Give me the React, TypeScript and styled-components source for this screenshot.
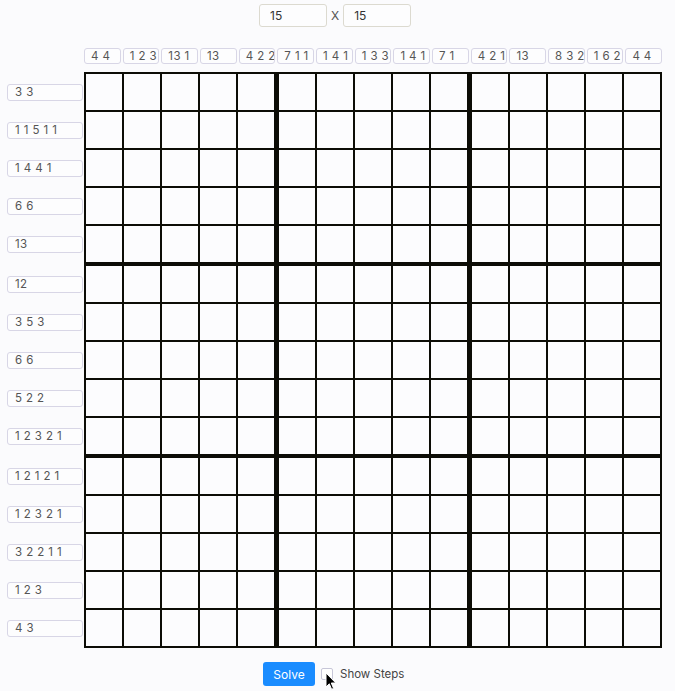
import React from 'react';
import styled, { createGlobalStyle } from 'styled-components';

const GlobalStyle = createGlobalStyle`
  html, body { margin: 0; padding: 0; background: #fbfbfd; }
  body { font-family: Inter, "Liberation Sans", sans-serif; color: #444; }
  * { box-sizing: border-box; }
`;

const colClues = ['4 4', '1 2 3', '13 1', '13', '4 2 2', '7 1 1', '1 4 1', '1 3 3', '1 4 1', '7 1', '4 2 1', '13', '8 3 2', '1 6 2', '4 4'];
const rowClues = ['3 3', '1 1 5 1 1', '1 4 4 1', '6 6', '13', '12', '3 5 3', '6 6', '5 2 2', '1 2 3 2 1', '1 2 1 2 1', '1 2 3 2 1', '3 2 2 1 1', '1 2 3', '4 3'];

const Page = styled.div`
  position: relative;
  width: 675px;
  height: 691px;
  display: flex;
  flex-direction: column;
`;

const SizeBar = styled.div`
  display: flex;
  align-items: center;
  gap: 4px;
  padding: 4px 0 0 259px;
  height: 27px;
`;

const SizeInput = styled.div`
  width: 68px;
  height: 23px;
  border: 1px solid #dcdad0;
  border-radius: 3px;
  background: #fdfdfe;
  font-size: 12px;
  color: #333;
  display: flex;
  align-items: center;
  padding-left: 10px;
`;

const Times = styled.span`
  font-size: 12px;
  color: #555;
`;

const Board = styled.div`
  display: grid;
  grid-template-columns: 77px 578px;
  grid-template-rows: 16px 576px;
  row-gap: 8px;
  padding-left: 7px;
  margin-top: 21px;
`;

const ColClueRow = styled.div`
  grid-column: 2;
  display: flex;
  gap: 2px;
`;

const ClueBox = styled.div`
  flex: 1;
  height: 100%;
  border: 1px solid #d8d6e6;
  border-radius: 3px;
  background: #fdfdfe;
  font-size: 11.5px;
  color: #555;
  display: flex;
  align-items: center;
  padding-left: 6px;
  white-space: pre;
  letter-spacing: 0.4px;
  overflow: hidden;
`;

const RowClueCol = styled.div`
  grid-column: 1;
  grid-row: 2;
  display: flex;
  flex-direction: column;
  gap: 4px;
  padding: 2px 0;
`;

const RowClueGroup = styled.div`
  display: flex;
  flex-direction: column;
  gap: 2px;
`;

const RowClueSlot = styled.div`
  height: 36px;
  display: flex;
  align-items: center;
`;

const RowClueBox = styled(ClueBox)`
  flex: none;
  width: 76px;
  height: 17px;
  padding-left: 7px;
`;

const Grid = styled.div`
  grid-column: 2;
  grid-row: 2;
  background: #0c0c06;
  padding: 2px;
  display: grid;
  grid-template-columns: repeat(3, 188px);
  grid-template-rows: repeat(3, 188px);
  column-gap: 5px;
  row-gap: 4px;
`;

const Block = styled.div`
  display: grid;
  grid-template-columns: repeat(5, 36px);
  grid-template-rows: repeat(5, 36px);
  gap: 2px;
`;

const Cell = styled.div`
  background: #fcfcfe;
`;

const Footer = styled.div`
  display: flex;
  align-items: center;
  padding-left: 263px;
  margin-top: 14px;
  height: 24px;
`;

const SolveButton = styled.button`
  width: 52px;
  height: 24px;
  border: none;
  border-radius: 3px;
  background: #1a8cff;
  color: #fff;
  font-family: inherit;
  font-size: 12px;
  padding: 0;
`;

const CheckBox = styled.span`
  width: 12px;
  height: 12px;
  margin-left: 6px;
  border: 1px solid #c7c6d8;
  border-radius: 2px;
  background: #fff;
`;

const Label = styled.span`
  margin-left: 7px;
  font-size: 11.5px;
  color: #444;
`;

const Cursor = styled.svg`
  position: absolute;
  left: 325px;
  top: 672px;
`;

const groups = [0, 1, 2];

export default function App() {
  return (
    <>
      <GlobalStyle />
      <Page>
        <SizeBar>
          <SizeInput>15</SizeInput>
          <Times>X</Times>
          <SizeInput>15</SizeInput>
        </SizeBar>
        <Board>
          <ColClueRow>
            {colClues.map((c, i) => (
              <ClueBox key={i}>{c}</ClueBox>
            ))}
          </ColClueRow>
          <RowClueCol>
            {groups.map((g) => (
              <RowClueGroup key={g}>
                {rowClues.slice(g * 5, g * 5 + 5).map((c, i) => (
                  <RowClueSlot key={i}>
                    <RowClueBox>{c}</RowClueBox>
                  </RowClueSlot>
                ))}
              </RowClueGroup>
            ))}
          </RowClueCol>
          <Grid>
            {Array.from({ length: 9 }).map((_, b) => (
              <Block key={b}>
                {Array.from({ length: 25 }).map((__, c) => (
                  <Cell key={c} />
                ))}
              </Block>
            ))}
          </Grid>
        </Board>
        <Footer>
          <SolveButton>Solve</SolveButton>
          <CheckBox />
          <Label>Show Steps</Label>
        </Footer>
        <Cursor width="12" height="19" viewBox="0 0 12 19">
          <path d="M1 1 L1 15 L4.3 11.8 L6.6 17.3 L8.6 16.4 L6.3 11 L10.8 11 Z" fill="#000" stroke="#fff" strokeWidth="1" strokeLinejoin="round" />
        </Cursor>
      </Page>
    </>
  );
}
